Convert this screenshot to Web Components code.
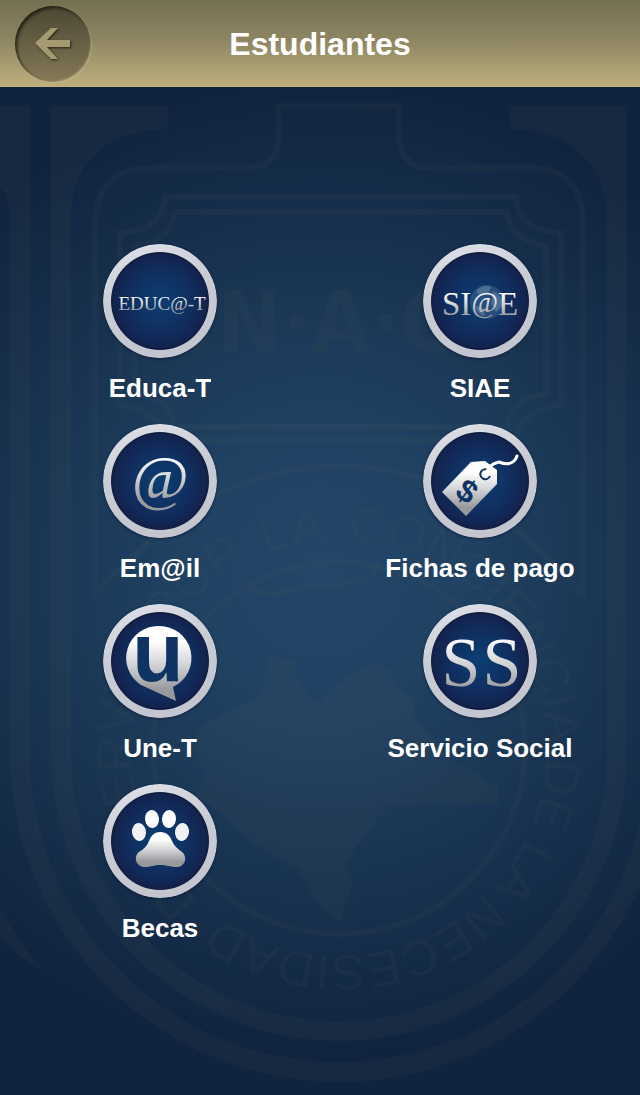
<!DOCTYPE html>
<html lang="es">
<head>
<meta charset="utf-8">
<meta name="viewport" content="width=device-width, initial-scale=1">
<title>Estudiantes</title>
<style>
  body {
    margin: 0;
    background: #10243f;
    color: white;
    font-family: "Liberation Sans", Arial, sans-serif;
  }
</style>
</head>
<body>
<app-screen>
  <app-header slot="header">Estudiantes</app-header>
  <menu-grid>
    <menu-tile icon="educat" href="#educa-t">Educa-T</menu-tile>
    <menu-tile icon="siae" href="#siae">SIAE</menu-tile>
    <menu-tile icon="email" href="#email">Em@il</menu-tile>
    <menu-tile icon="tag" href="#fichas">Fichas de pago</menu-tile>
    <menu-tile icon="unet" href="#une-t">Une-T</menu-tile>
    <menu-tile icon="social" href="#servicio-social">Servicio Social</menu-tile>
    <menu-tile icon="paw" href="#becas">Becas</menu-tile>
  </menu-grid>
</app-screen>

<script>
/**
 * @class CrestBackdrop
 * @description The university shield, drawn faintly behind the menu.
 */
class CrestBackdrop extends HTMLElement {
  /**
   * Words of the motto and where each starts along the ring.
   * @public
   * @readonly
   * @type {Array}
   */
  static motto = [
    ['POR', 0],
    ['LA', 128],
    ['CONCIENCIA', 211],
    ['DE', 538],
    ['LA', 621],
    ['NECESIDAD', 690],
    ['DE', 1008],
    ['SERVIR', 1090]
  ];

  constructor() {
    super();
    const words = CrestBackdrop.motto
      .map(([word, start]) => `<text class="fill motto"><textPath href="#ring" startOffset="${start}">${word}</textPath></text>`)
      .join('');

    this.attachShadow({ mode: 'open' });
    this.shadowRoot.innerHTML = `
      <style>
        :host {
          display: block;
          pointer-events: none;
        }

        svg {
          display: block;
          height: 100%;
          width: 100%;
        }

        .fill {
          fill: var(--crest);
        }

        .line {
          fill: none;
          stroke: var(--crest);
          stroke-width: 6;
        }

        .band {
          fill: none;
          stroke: var(--crest);
          stroke-width: 20;
        }

        .motto {
          font: 50px "Liberation Sans", Arial, sans-serif;
        }

        .initials {
          font: bold 86px "DejaVu Sans Condensed", "Liberation Sans", sans-serif;
          text-anchor: middle;
        }
      </style>

      <svg viewBox="0 0 640 1095" preserveAspectRatio="xMidYMid slice" aria-hidden="true">
        <defs>
          <path id="ring" d="M167 632A207 207 0 0 1 511 864A207 207 0 0 1 167 632"/>
        </defs>

        <!-- nested U bands -->
        <path class="band" d="M61 106V753A278 278 0 0 0 617 753V106"/>
        <path class="band" d="M20 106V753A319 319 0 0 0 658 753V106"/>
        <path class="fill" d="M71 106H168V129C105 130 71 165 71 218Z"/>
        <path class="fill" d="M607 106H509V129C572 130 607 165 607 218Z"/>
        <path class="fill" d="M0 106H10V218Q9 200 0 186Z"/>
        <path class="fill" d="M0 906Q18 943 43 970Q20 960 0 936Z"/>

        <!-- shield outline -->
        <path class="line" d="M95 592V225Q97 168 150 168H250Q279 166 279 135V106H399V135Q400 166 428 168H530Q583 168 583 225V592L528 540A278 278 0 0 0 151 540Z"/>

        <!-- name plate -->
        <path class="line" d="M165 197H516Q518 232 561 233V405Q518 410 516 440H165Q162 410 120 405V233Q163 232 165 197Z"/>
        <path class="line" d="M175 212H507Q510 240 546 246V394Q510 398 507 427H175Q172 398 135 394V246Q172 240 175 212Z"/>
        <text class="fill initials" x="338" y="352">UN·A·CH</text>

        <!-- motto ring -->
        <circle class="line" cx="339" cy="748" r="186"/>
        <path class="line" d="M250 587Q268 600 310 585Q330 590 352 581Q376 581 378 562"/>
        ${words}

        <!-- state map -->
        <path class="fill" d="M269 655L284 660L298 661L296 676L300 683Q308 698 320 702Q330 688 343 681Q358 667 376 663L392 671L394 683L412 699L416 720Q436 738 449 760L480 776L498 786V804L388 806Q364 834 345 865L353 881L341 922Q324 916 314 898L298 869L261 849L208 804L196 796L208 772L196 760Q194 734 204 723L230 710L261 695Z"/>
      </svg>
    `;
  }
}

/**
 * @class AppScreen
 * @description Full page shell: header, backdrop and content.
 */
class AppScreen extends HTMLElement {
  constructor() {
    super();
    this.attachShadow({ mode: 'open' });
    this.shadowRoot.innerHTML = `
      <style>
        :host {
          --crest: rgba(104, 104, 92, .09);
          background: radial-gradient(ellipse 76% 44% at 50% 52%, #234669 0%, #204162 30%, #183350 65%, #10243f 100%);
          display: flex;
          flex-direction: column;
          min-height: 100vh;
          position: relative;
        }

        crest-backdrop {
          inset: 0;
          position: absolute;
        }

        slot[name="header"]::slotted(*) {
          position: relative;
        }

        main {
          padding: 157px 0 24px;
          position: relative;
        }
      </style>

      <crest-backdrop></crest-backdrop>
      <slot name="header"></slot>
      <main><slot></slot></main>
    `;
  }
}

/**
 * @class AppHeader
 * @description Gold bar with a back button and the page title.
 */
class AppHeader extends HTMLElement {
  constructor() {
    super();
    this.attachShadow({ mode: 'open' });
    this.shadowRoot.innerHTML = `
      <style>
        :host {
          align-items: center;
          background: linear-gradient(#757052, #8d8562 45%, #beb17c);
          box-sizing: border-box;
          display: grid;
          grid-template-columns: 76px 1fr 76px;
          height: 87px;
          padding: 0 15px;
        }

        button {
          background: linear-gradient(#4b4634, #857a57);
          border: 0;
          border-radius: 50%;
          box-shadow:
            inset 2px 2px 3px rgba(20, 18, 10, .75),
            inset -1px -1px 1px rgba(190, 178, 135, .4),
            1px 1px 1px rgba(214, 203, 160, .4);
          cursor: pointer;
          height: 76px;
          padding: 0;
          width: 76px;
        }

        svg {
          display: block;
          filter: drop-shadow(1px 1px 1px rgba(20, 18, 10, .8));
        }

        h1 {
          font-size: 32px;
          line-height: 36px;
          margin: 0;
          text-align: center;
        }
      </style>

      <button type="button" aria-label="Volver">
        <svg width="76" height="76" viewBox="0 0 76 76" aria-hidden="true">
          <path fill="#a69b70" d="M20 37L36 22H43L32 34H55V41H32L43 53H36Z"/>
        </svg>
      </button>
      <h1><slot></slot></h1>
    `;

    this.shadowRoot.querySelector('button').addEventListener('click', () => history.back());
  }
}

/**
 * @class MenuGrid
 * @description Two equal columns of tiles.
 */
class MenuGrid extends HTMLElement {
  constructor() {
    super();
    this.attachShadow({ mode: 'open' });
    this.shadowRoot.innerHTML = `
      <style>
        :host {
          display: grid;
          grid-template-columns: repeat(2, 1fr);
          row-gap: 22px;
        }
      </style>
      <slot></slot>
    `;
  }
}

/**
 * @class MenuTile
 * @description A round icon with a caption under it.
 */
class MenuTile extends HTMLElement {
  /**
   * @public
   * @readonly
   * @type {Object<string, string>}
   */
  static icons = {
    educat: `<text x="59" y="66" font-size="19">EDUC@-T</text>`,

    siae: `
      <circle cx="64" cy="58" r="17" fill="#3c618b" opacity=".55"/>
      <path d="M53 47Q60 40 68 43L65 50L57 52ZM70 47Q80 52 80 61L73 68L68 60ZM52 62L60 64L62 72Q54 70 52 62Z" fill="#7c96b4" opacity=".45"/>
      <text x="57" y="71" font-size="33">SI<tspan font-style="italic" font-size="29" dy="-3">@</tspan><tspan dy="3">E</tspan></text>`,

    email: `<text x="57" y="74" font-size="62" font-style="italic">@</text>`,

    tag: `
      <path fill="url(#metal)" d="M19 68L48 38L62 37L74 46V60L43 92Z"/>
      <path fill="none" stroke="#12325f" stroke-width="2" d="M65 46A5 5 0 1 0 67 52"/>
      <path fill="none" stroke="white" stroke-width="3" stroke-linecap="round" d="M63 51Q65 40 76 38Q86 42 91 37Q93 35 94 32"/>
      <text class="cut" x="0" y="11" font-size="32" transform="translate(44 67) rotate(35)">$</text>`,

    unet: `
      <path fill="url(#metal)" d="M56 22A32 32 0 0 1 70 83L73 97L38 81A32 32 0 0 1 56 22Z"/>
      <text class="cut" x="55" y="77" font-size="84">u</text>`,

    social: `
      <text x="38" y="82" font-size="70">S</text>
      <text x="79" y="82" font-size="70">S</text>`,

    paw: `
      <ellipse cx="36" cy="48" rx="7" ry="9" fill="#f0f1f3" transform="rotate(-8 36 48)"/>
      <ellipse cx="49" cy="35" rx="7" ry="9" fill="white" transform="rotate(-5 49 35)"/>
      <ellipse cx="66" cy="35" rx="7" ry="9" fill="white" transform="rotate(5 66 35)"/>
      <ellipse cx="79" cy="48" rx="7" ry="9" fill="#f0f1f3" transform="rotate(8 79 48)"/>
      <path fill="url(#metal)" d="M57 48C64 48 67 52 69 57C71 62 75 65 79 68C85 73 82 83 74 83C67 83 64 81 57 81C51 81 48 83 42 83C33 83 30 73 36 68C41 65 44 62 46 57C48 52 51 48 57 48Z"/>`
  };

  /**
   * @public
   * @readonly
   * @type {string[]}
   */
  static observedAttributes = ['href', 'icon'];

  constructor() {
    super();
    this.attachShadow({ mode: 'open' });
    this.shadowRoot.innerHTML = `
      <style>
        :host {
          display: block;
        }

        a {
          align-items: center;
          color: inherit;
          display: flex;
          flex-direction: column;
          gap: 16px;
          text-decoration: none;
        }

        svg {
          border-radius: 50%;
          box-shadow: 0 1px 3px rgba(8, 18, 36, .5);
          display: block;
          height: 114px;
          width: 114px;
        }

        text {
          fill: url(#metal);
          font-family: "Liberation Serif", serif;
          text-anchor: middle;
        }

        text.cut {
          fill: #0f3464;
          font-family: "Liberation Sans", sans-serif;
          font-weight: bold;
        }

        .label {
          font-size: 26px;
          font-weight: bold;
          line-height: 28px;
          overflow: hidden;
        }
      </style>

      <a>
        <svg viewBox="0 0 114 114" aria-hidden="true">
          <defs>
            <linearGradient id="rim" x2=".3" y2="1">
              <stop stop-color="#e0e3ea"/>
              <stop offset=".5" stop-color="#c9ccd4"/>
              <stop offset="1" stop-color="#c3c6cf"/>
            </linearGradient>
            <radialGradient id="face">
              <stop stop-color="#0b3f73"/>
              <stop offset=".5" stop-color="#0f3264"/>
              <stop offset=".93" stop-color="#132450"/>
              <stop offset="1" stop-color="#101c3e"/>
            </radialGradient>
            <linearGradient id="metal" x2="0" y2="1">
              <stop offset=".2" stop-color="#ffffff"/>
              <stop offset=".5" stop-color="#d5d6d8"/>
              <stop offset=".85" stop-color="#97999d"/>
            </linearGradient>
          </defs>
          <circle cx="57" cy="57" r="57" fill="url(#rim)"/>
          <circle cx="57" cy="57" r="49" fill="url(#face)"/>
          <g id="glyph"></g>
        </svg>
        <span class="label"><slot></slot></span>
      </a>
    `;
  }

  /**
   * @param {string} attr
   * @param {string} oldval
   * @param {string} newval
   */
  attributeChangedCallback(attr, oldval, newval) {
    if (attr === 'href') {
      this.shadowRoot.querySelector('a').setAttribute('href', newval);
    } else {
      this.shadowRoot.querySelector('#glyph').innerHTML = MenuTile.icons[newval] || '';
    }
  }
}

customElements.define('crest-backdrop', CrestBackdrop);
customElements.define('app-screen', AppScreen);
customElements.define('app-header', AppHeader);
customElements.define('menu-grid', MenuGrid);
customElements.define('menu-tile', MenuTile);
</script>
</body>
</html>
